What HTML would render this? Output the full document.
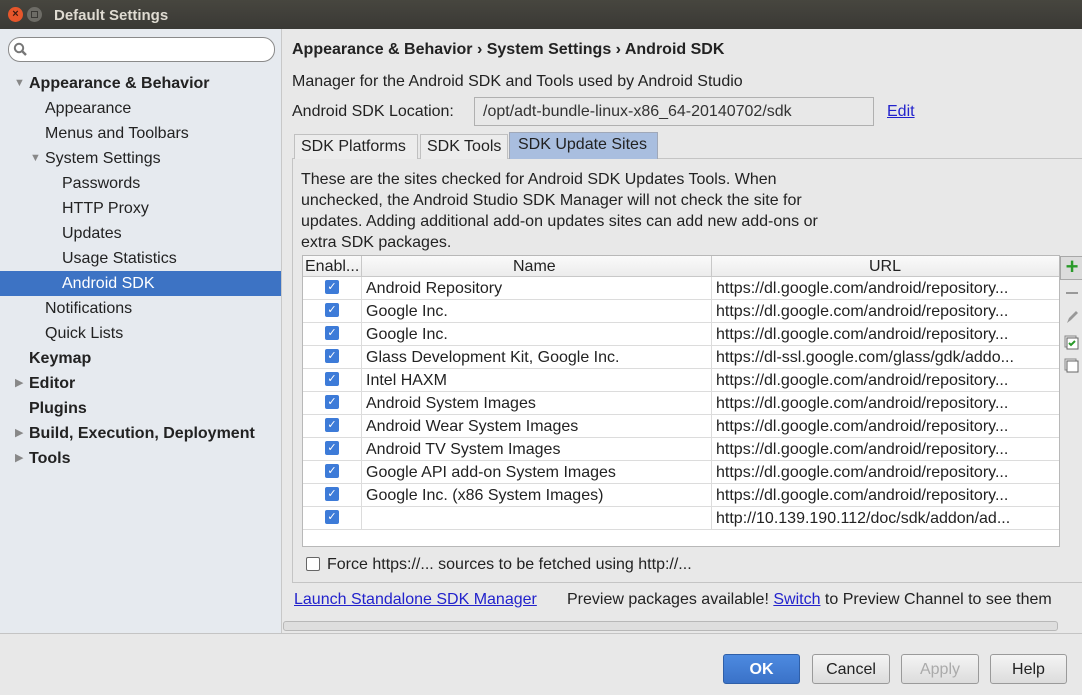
<!DOCTYPE html>
<html><head><meta charset="utf-8"><style>
*{margin:0;padding:0;box-sizing:border-box}
body{width:1082px;height:695px;overflow:hidden;background:#e8e8e8;font-family:"Liberation Sans","DejaVu Sans",sans-serif;font-size:16px;color:#222;position:relative}
.a{position:absolute;white-space:nowrap}
.title{left:0;top:0;width:1082px;height:29px;background:linear-gradient(#47463f,#3a3935);}
.left{left:0;top:29px;width:282px;height:604px;background:#e6eaef;border-right:1px solid #c8c8c8}
.ti{position:absolute;height:25px;line-height:25px}
.b{font-weight:bold}
.cb{position:absolute;width:14px;height:14px;background:#3d7bd8;border-radius:2px;color:#fff;font-size:11px;line-height:14px;text-align:center;font-weight:bold}
.row{position:absolute;left:303px;width:756px;height:23px;border-bottom:1px solid #dcdcdc;background:#fff}
.row span{position:absolute;top:3px}
.btn{position:absolute;top:654px;height:30px;border:1px solid #9a9a9a;border-radius:3px;background:linear-gradient(#f4f4f4,#dcdcdc);text-align:center;line-height:29px}
a{color:#2222cc;text-decoration:underline}
</style></head><body>
<div class="a title"></div>
<div class="a" style="left:8px;top:7px;width:15px;height:15px;border-radius:50%;background:#e6562b;color:#3a1a10;font-size:11px;line-height:15px;text-align:center;font-weight:bold">×</div>
<div class="a" style="left:27px;top:7px;width:15px;height:15px;border-radius:50%;background:#6d6c66;"><div style="margin:4px;width:7px;height:7px;border:1px solid #3a3935"></div></div>
<div class="a b" style="left:54px;top:7px;color:#dfdbd2;font-size:15px">Default Settings</div>

<div class="a left"></div>
<div class="a" style="left:8px;top:37px;width:267px;height:25px;border:1px solid #8a8a8a;border-radius:12px;background:#fff"></div>
<svg class="a" style="left:13px;top:42px" width="16" height="16"><circle cx="6" cy="6" r="4.2" fill="none" stroke="#777" stroke-width="2"/><path d="M9 9l4 4" stroke="#777" stroke-width="2.4"/></svg>
<div class="ti" style="left:14px;top:71px;color:#888;font-size:11px">▼</div>
<div class="ti b" style="left:29px;top:71px">Appearance &amp; Behavior</div>
<div class="ti" style="left:45px;top:96px">Appearance</div>
<div class="ti" style="left:45px;top:121px">Menus and Toolbars</div>
<div class="ti" style="left:30px;top:146px;color:#888;font-size:11px">▼</div>
<div class="ti" style="left:45px;top:146px">System Settings</div>
<div class="ti" style="left:62px;top:171px">Passwords</div>
<div class="ti" style="left:62px;top:196px">HTTP Proxy</div>
<div class="ti" style="left:62px;top:221px">Updates</div>
<div class="ti" style="left:62px;top:246px">Usage Statistics</div>
<div class="a" style="left:0;top:271px;width:281px;height:25px;background:#3d73c4"></div>
<div class="ti" style="left:62px;top:271px;color:#fff">Android SDK</div>
<div class="ti" style="left:45px;top:296px">Notifications</div>
<div class="ti" style="left:45px;top:321px">Quick Lists</div>
<div class="ti b" style="left:29px;top:346px">Keymap</div>
<div class="ti" style="left:15px;top:371px;color:#888;font-size:11px">▶</div>
<div class="ti b" style="left:29px;top:371px">Editor</div>
<div class="ti b" style="left:29px;top:396px">Plugins</div>
<div class="ti" style="left:15px;top:421px;color:#888;font-size:11px">▶</div>
<div class="ti b" style="left:29px;top:421px">Build, Execution, Deployment</div>
<div class="ti" style="left:15px;top:446px;color:#888;font-size:11px">▶</div>
<div class="ti b" style="left:29px;top:446px">Tools</div>

<div class="a b" style="left:292px;top:41px">Appearance &amp; Behavior › System Settings › Android SDK</div>
<div class="a" style="left:292px;top:73px">Manager for the Android SDK and Tools used by Android Studio</div>
<div class="a" style="left:292px;top:103px">Android SDK Location:</div>
<div class="a" style="left:474px;top:97px;width:400px;height:29px;border:1px solid #b0b0b0;background:#e8e8e8;padding:5px 8px;color:#333">/opt/adt-bundle-linux-x86_64-20140702/sdk</div>
<div class="a" style="left:887px;top:103px"><a>Edit</a></div>

<div class="a" style="left:292px;top:158px;width:790px;height:425px;border:1px solid #c4c4c4;border-right:none"></div>
<div class="a" style="left:294px;top:134px;width:124px;height:25px;border:1px solid #c0c0c0;border-bottom:none;background:#ececec;padding:3px 6px">SDK Platforms</div>
<div class="a" style="left:420px;top:134px;width:88px;height:25px;border:1px solid #c0c0c0;border-bottom:none;background:#ececec;padding:3px 6px">SDK Tools</div>
<div class="a" style="left:509px;top:132px;width:149px;height:27px;border:1px solid #a0a8b8;border-bottom:none;background:#a9bedf;padding:3px 8px">SDK Update Sites</div>

<div class="a" style="left:301px;top:169px;line-height:21px;white-space:normal;width:580px">These are the sites checked for Android SDK Updates Tools. When<br>unchecked, the Android Studio SDK Manager will not check the site for<br>updates. Adding additional add-on updates sites can add new add-ons or<br>extra SDK packages.</div>

<div class="a" style="left:302px;top:255px;width:758px;height:292px;border:1px solid #b8b8b8;background:#fff"></div>
<div class="a" style="left:303px;top:256px;width:756px;height:21px;background:linear-gradient(#fafafa,#ececec);border-bottom:1px solid #c8c8c8"></div>
<div class="a" style="left:361px;top:256px;width:1px;height:21px;background:#c8c8c8"></div>
<div class="a" style="left:711px;top:256px;width:1px;height:21px;background:#c8c8c8"></div>
<div class="a" style="left:305px;top:258px">Enabl...</div>
<div class="a" style="left:513px;top:258px">Name</div>
<div class="a" style="left:869px;top:258px">URL</div>

<div id="rows"></div>
<script>
var d=[["Android Repository","https://dl.google.com/android/repository..."],["Google Inc.","https://dl.google.com/android/repository..."],["Google Inc.","https://dl.google.com/android/repository..."],["Glass Development Kit, Google Inc.","https://dl-ssl.google.com/glass/gdk/addo..."],["Intel HAXM","https://dl.google.com/android/repository..."],["Android System Images","https://dl.google.com/android/repository..."],["Android Wear System Images","https://dl.google.com/android/repository..."],["Android TV System Images","https://dl.google.com/android/repository..."],["Google API add-on System Images","https://dl.google.com/android/repository..."],["Google Inc. (x86 System Images)","https://dl.google.com/android/repository..."],["","http://10.139.190.112/doc/sdk/addon/ad..."]];
var h="";d.forEach(function(r,i){var y=277+i*23;h+='<div class="row" style="top:'+y+'px"><div class="cb" style="left:22px;top:3px">✓</div><div style="position:absolute;left:58px;top:0;width:1px;height:23px;background:#dcdcdc"></div><div style="position:absolute;left:408px;top:0;width:1px;height:23px;background:#dcdcdc"></div><span style="left:63px">'+r[0]+'</span><span style="left:413px">'+r[1]+'</span></div>';});
document.getElementById("rows").innerHTML=h;
</script>
<div class="a" style="left:1060px;top:256px;width:24px;height:24px;border:1px solid #a8a8a8;background:#dcdcdc;color:#2a9a2a;font-size:22px;line-height:20px;text-align:center;font-weight:bold">+</div>
<div class="a" style="left:1066px;top:292px;width:12px;height:2px;background:#999"></div>
<svg class="a" style="left:1064px;top:309px" width="16" height="16"><path d="M3 14l2-5 7-7 2 2-7 7z" fill="#999"/></svg>
<svg class="a" style="left:1064px;top:335px" width="16" height="16"><rect x="1" y="1" width="11" height="11" fill="none" stroke="#888"/><rect x="3" y="3" width="11" height="11" fill="#fff" stroke="#666"/><path d="M5 8l2 2 4-4" stroke="#2a9a2a" stroke-width="2" fill="none"/></svg>
<svg class="a" style="left:1064px;top:358px" width="16" height="16"><rect x="1" y="1" width="11" height="11" fill="none" stroke="#888"/><rect x="3" y="3" width="11" height="11" fill="#fff" stroke="#666"/></svg>

<div class="a" style="left:306px;top:557px;width:14px;height:14px;border:1px solid #666;border-radius:2px;background:#fff"></div>
<div class="a" style="left:327px;top:556px">Force https://... sources to be fetched using http://...</div>
<div class="a" style="left:294px;top:591px"><a>Launch Standalone SDK Manager</a></div>
<div class="a" style="left:567px;top:591px">Preview packages available! <a>Switch</a> to Preview Channel to see them</div>
<div class="a" style="left:283px;top:621px;width:775px;height:10px;border:1px solid #b8b8b8;border-radius:3px;background:#dedede"></div>
<div class="a" style="left:0;top:633px;width:1082px;height:1px;background:#c4c4c4"></div>

<div class="btn b" style="left:723px;width:77px;background:linear-gradient(#4d8ae0,#3a72c8);border-color:#2f5fa8;color:#fff">OK</div>
<div class="btn" style="left:812px;width:78px">Cancel</div>
<div class="btn" style="left:901px;width:78px;color:#aaa">Apply</div>
<div class="btn" style="left:990px;width:77px">Help</div>
</body></html>
